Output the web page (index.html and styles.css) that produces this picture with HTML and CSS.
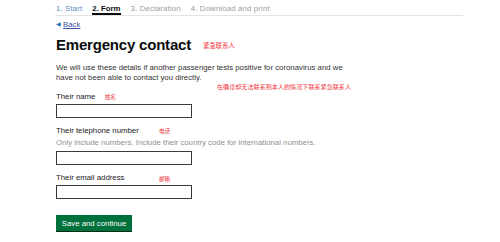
FILE: index.html
```html
<!DOCTYPE html>
<html lang="en">
<head>
<meta charset="utf-8">
<title>Emergency contact</title>
<link rel="stylesheet" href="styles.css">
</head>
<body>
<div class="page">
  <nav class="tabs">
    <span class="tab tab-done">1. Start</span>
    <span class="tab tab-active">2. Form</span>
    <span class="tab">3. Declaration</span>
    <span class="tab">4. Download and print</span>
  </nav>
  <a class="back" href="#"><span class="back-arrow">&#9664;</span>Back</a>
  <h1 class="title">Emergency contact</h1>
  <p class="lead">We will use these details if another passenger tests positive for coronavirus and we have not been able to contact you directly.</p>
  <div class="field">
    <label class="label">Their name</label>
    <input class="input" type="text">
  </div>
  <div class="field">
    <label class="label">Their telephone number</label>
    <div class="hint">Only include numbers. Include their country code for international numbers.</div>
    <input class="input" type="text">
  </div>
  <div class="field">
    <label class="label">Their email address</label>
    <input class="input" type="text">
  </div>
  <button class="button" type="button">Save and continue</button>

  <span class="note note-title">紧急联系人</span>
  <span class="note note-lead">在确诊却无法联系到本人的情况下联系紧急联系人</span>
  <span class="note note-name">姓名</span>
  <span class="note note-phone">电话</span>
  <span class="note note-email">邮箱</span>
</div>
</body>
</html>
```

FILE: styles.css
```css
* { box-sizing: border-box; }
html, body { margin: 0; padding: 0; background: #fff; }
body {
  font-family: "Liberation Sans", Arial, sans-serif;
  color: #0b0c0c;
  font-size: 7.8px;
}
.page {
  position: relative;
  width: 500px;
  height: 242px;
  padding-left: 56px;
  padding-right: 37px;
  display: flex;
  flex-direction: column;
  align-items: flex-start;
}
.tabs {
  display: flex;
  gap: 10px;
  align-self: stretch;
  margin-left: -1px;
  padding-left: 1px;
  border-bottom: 1px solid #e3e3e3;
  height: 16px;
  padding-top: 4px;
}
.tab {
  line-height: 9px;
  color: #9a9b9c;
  height: 11px;
  letter-spacing: 0.15px;
}
.tab-done { color: #5a8bc4; }
.tab-active {
  color: #0b0c0c;
  font-weight: bold;
  border-bottom: 2px solid #0b0c0c;
  letter-spacing: 0;
}
.back {
  margin-top: 4px;
  line-height: 9px;
  color: #3d4fa0;
  text-decoration: underline;
  text-underline-offset: 1px;
}
.back-arrow {
  color: #1d70b8;
  font-size: 6px;
  display: inline-block;
  margin-right: 2px;
  vertical-align: 1px;
  text-decoration: none;
}
.title {
  margin: 7px 0 0;
  font-size: 15px;
  line-height: 18px;
  font-weight: bold;
  letter-spacing: -0.2px;
}
.lead {
  margin: 9px 0 0;
  line-height: 10px;
  width: 288px;
  color: #333;
}
.field {
  display: flex;
  flex-direction: column;
  align-items: flex-start;
  margin-top: 9px;
}
.field + .field { margin-top: 8px; }
.label {
  line-height: 9px;
  color: #1a1a1a;
}
.hint {
  margin-top: 3px;
  line-height: 9px;
  color: #8e9193;
}
.input {
  margin: 3px 0 0;
  width: 136px;
  height: 14px;
  border: 1.5px solid #3a3a3a;
  border-radius: 0;
  background: #fff;
  padding: 0;
}
.hint + .input { margin-top: 4px; }
.button {
  margin-top: 16px;
  width: 76px;
  height: 16px;
  border: 0;
  padding: 0;
  background: #00703c;
  color: #fff;
  font-family: "Liberation Sans", Arial, sans-serif;
  font-size: 7.8px;
  box-shadow: 0 1px 0 #002d18;
}
.note {
  position: absolute;
  color: #f0343a;
  font-family: "Noto Sans CJK SC", "Noto Sans", sans-serif;
  font-size: 6px;
  line-height: 7px;
  white-space: nowrap;
}
.note-title { left: 203px; top: 41.5px; font-size: 6.4px; }
.note-lead { left: 217px; top: 83px; font-size: 6.1px; }
.note-name { left: 105px; top: 93.5px; font-size: 5.6px; }
.note-phone { left: 159px; top: 128px; font-size: 5.6px; }
.note-email { left: 159px; top: 176px; font-size: 5.6px; }
```
